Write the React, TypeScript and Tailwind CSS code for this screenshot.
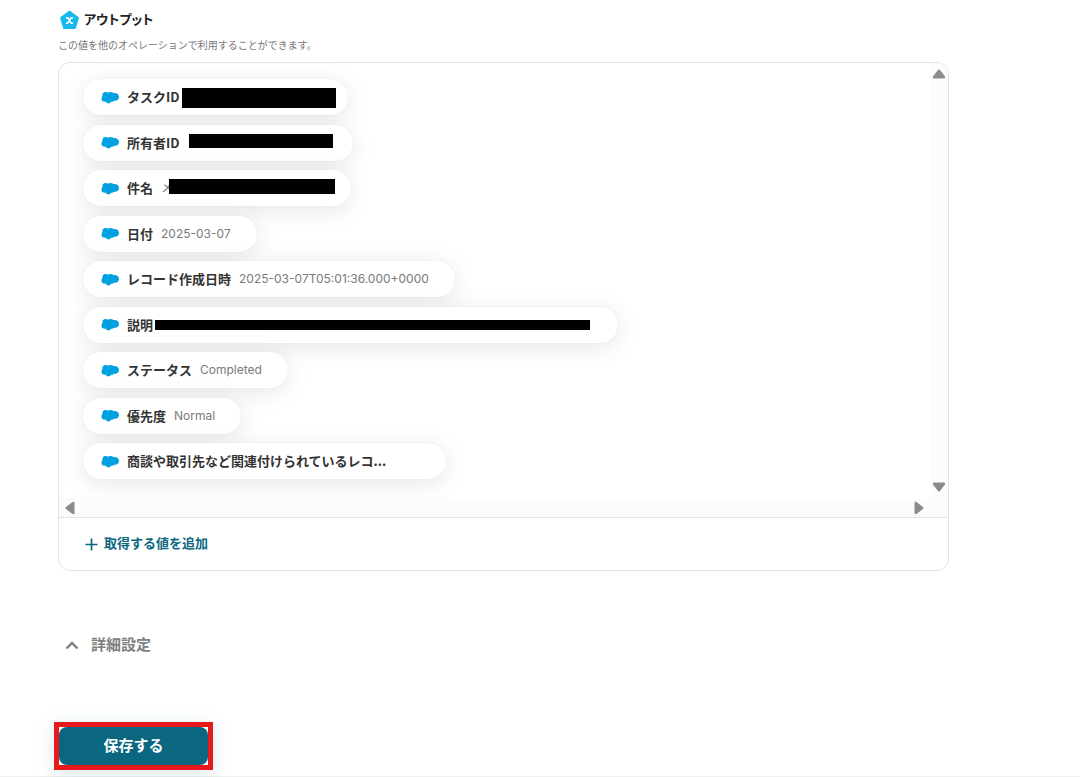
import type { ReactNode } from "react";

type Chip = { label: string; value?: string; bar?: string; size?: string };

const chips: Chip[] = [
  { label: "タスクID", bar: "left-[99px] top-[9px] w-[154px] h-5", size: "w-[265px]" },
  { label: "所有者ID", bar: "left-[106px] top-[9px] w-36 h-[14px]", size: "w-[270px]" },
  { label: "件名", value: "メ", bar: "left-[86px] top-[9px] w-[166px] h-[15px]", size: "w-[268px]" },
  { label: "日付", value: "2025-03-07" },
  { label: "レコード作成日時", value: "2025-03-07T05:01:36.000+0000" },
  { label: "説明", bar: "left-[72px] top-[13px] w-[435px] h-[10px]", size: "w-[535px]" },
  { label: "ステータス", value: "Completed" },
  { label: "優先度", value: "Normal" },
  { label: "商談や取引先など関連付けられているレコ...", size: "w-[363px]" },
];

function CloudIcon() {
  return (
    <svg viewBox="0 0 18 13" className="h-[13px] w-[18px] shrink-0" fill="#00a1e0" aria-hidden="true">
      <path d="M1.6 4.6C1 2.2 2.600.9 4.500.9c1.100 0 2 .3 2.600.800C7.700 1.100 8.700.8 9.700.9c1.100 0 2 .4 2.700 1.100C15 1.500 18 3 18 6c0 2.700-2.200 4.200-4.900 3.800-.6.9-1.800 1.200-3 .9-.6 1.200-1.700 1.800-3 1.700-1.200-.1-2.100-.8-2.600-1.800C2.400 11 .5 9.900.5 7.900c0-1.400.4-2.500 1.100-3.300Z" />
    </svg>
  );
}

function ScrollArrow({ label, rotate }: { label: string; rotate: string }) {
  return (
    <button type="button" aria-label={label} className="flex size-[18px] items-center justify-center">
      <svg viewBox="0 0 14 14" className={`size-[14px] ${rotate}`} fill="#8b8b8b" aria-hidden="true">
        <path d="M6 3 Q7 1.8 8 3 L13 9.5 Q13.6 11.5 12 11.5 H2 Q.4 11.5 1 9.5Z" />
      </svg>
    </button>
  );
}

function ChipPill({ chip }: { chip: Chip }) {
  return (
    <li
      className={`relative flex h-9 items-center gap-2 rounded-full bg-white pl-[18px] pr-[26px] shadow-[0_0_2px_rgba(0,0,0,0.06),0_4px_24px_rgba(0,0,0,0.1)] ${chip.size ?? ""}`}
    >
      <CloudIcon />
      <span className="whitespace-nowrap font-['Noto_Sans_CJK_JP',sans-serif] text-[13px] leading-5 font-bold text-[#333]">
        {chip.label}
      </span>
      {chip.value && <span className="whitespace-nowrap text-[12px] text-[#7a7a7a]">{chip.value}</span>}
      {chip.bar && <span className={`absolute bg-black ${chip.bar}`} />}
    </li>
  );
}

function Panel({ children }: { children: ReactNode }) {
  return (
    <div className="mt-[9px] overflow-hidden rounded-xl border border-[#e2e2e2]">
      <div className="grid grid-cols-[1fr_18px]">
        {children}
        <div className="flex flex-col items-center justify-between bg-[#fcfcfc] py-[2px]">
          <ScrollArrow label="上へスクロール" rotate="" />
          <ScrollArrow label="下へスクロール" rotate="rotate-180" />
        </div>
        <div className="flex h-[19px] items-center justify-between bg-[#fcfcfc] px-[2px]">
          <ScrollArrow label="左へスクロール" rotate="-rotate-90" />
          <ScrollArrow label="右へスクロール" rotate="rotate-90" />
        </div>
        <div className="bg-[#fcfcfc]" />
      </div>
      <div className="border-t border-[#e2e2e2] px-[26px] py-4">
        <button type="button" className="flex h-5 items-center gap-[6px] text-[13px] font-bold text-[#0b6780]">
          <svg viewBox="0 0 13 13" className="size-[13px]" stroke="currentColor" strokeWidth="1.7" aria-hidden="true">
            <path d="M6.5 .5v12M.5 6.5h12" />
          </svg>
          取得する値を追加
        </button>
      </div>
    </div>
  );
}

export default function App() {
  return (
    <main className="min-h-screen border-b border-[#f0f0f0] bg-white pl-[58px] pr-[131px] pt-[10px] font-[Inter,'Noto_Sans_CJK_JP',sans-serif]">
      <section>
        <h2 className="flex h-5 items-center gap-1 text-[13px] font-bold text-[#222]">
          <svg viewBox="0 0 22 22" className="size-[22px]" aria-hidden="true">
            <path
              d="M11.5 3 19.6 9 16.6 18.8H6.4L3.4 9Z"
              fill="#17b8ee"
              stroke="#17b8ee"
              strokeWidth="2.6"
              strokeLinejoin="round"
            />
            <path d="M8 8.9h1.900l3.300 5.400h1.900M14.900 8.900h-1.600l-3.800 5.400H7.900" fill="none" stroke="#fff" strokeWidth="1.6" />
          </svg>
          <span className="[font-feature-settings:'palt']">アウトプット</span>
        </h2>
        <p className="mt-[7px] text-[10px] leading-4 text-[#777]">この値を他のオペレーションで利用することができます。</p>

        <Panel>
          <ul className="flex h-[435px] flex-col items-start justify-between pb-[19px] pl-6 pt-4">
            {chips.map((chip) => (
              <ChipPill key={chip.label} chip={chip} />
            ))}
          </ul>
        </Panel>
      </section>

      <button type="button" className="mt-16 flex h-5 items-center gap-3 pl-[7px] text-[15px] font-bold text-[#808080]">
        <svg viewBox="0 0 14 10" className="h-[10px] w-[14px]" fill="none" stroke="currentColor" strokeWidth="2.4" aria-hidden="true">
          <path d="M1.5 8.5 7 3l5.5 5.5" />
        </svg>
        詳細設定
      </button>

      {/* Save button with its highlight frame */}
      <div className="-ml-1 mt-[67px] w-fit border-[5px] border-[#e8191c] shadow-[0_4px_20px_rgba(11,103,128,0.15)]">
        <button type="button" className="block h-[38px] w-[149px] rounded-lg bg-[#0b6780] text-[15px] font-bold text-white">
          保存する
        </button>
      </div>
    </main>
  );
}
